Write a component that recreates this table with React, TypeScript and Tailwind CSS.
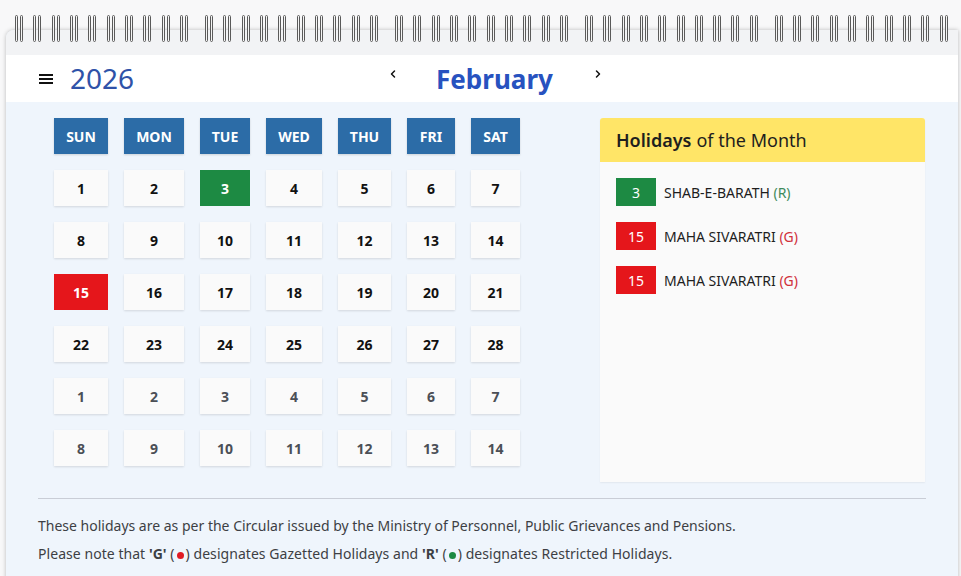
import { ChevronLeft, ChevronRight } from "lucide-react";

const days = ["SUN", "MON", "TUE", "WED", "THU", "FRI", "SAT"];

type Cell = { n: number; muted?: boolean; type?: "G" | "R" };

const weeks: Cell[][] = [
  [{ n: 1 }, { n: 2 }, { n: 3, type: "R" }, { n: 4 }, { n: 5 }, { n: 6 }, { n: 7 }],
  [{ n: 8 }, { n: 9 }, { n: 10 }, { n: 11 }, { n: 12 }, { n: 13 }, { n: 14 }],
  [{ n: 15, type: "G" }, { n: 16 }, { n: 17 }, { n: 18 }, { n: 19 }, { n: 20 }, { n: 21 }],
  [{ n: 22 }, { n: 23 }, { n: 24 }, { n: 25 }, { n: 26 }, { n: 27 }, { n: 28 }],
  [1, 2, 3, 4, 5, 6, 7].map((n) => ({ n, muted: true })),
  [8, 9, 10, 11, 12, 13, 14].map((n) => ({ n, muted: true })),
];

const holidays = [
  { day: 3, name: "SHAB-E-BARATH", type: "R" },
  { day: 15, name: "MAHA SIVARATRI", type: "G" },
  { day: 15, name: "MAHA SIVARATRI", type: "G" },
];

const Ring = () => (
  <div className="w-[3px] h-[27px] rounded-full border border-[#5a5a5a] bg-linear-to-r from-[#b8b8b8] via-[#f4f4f4] to-[#a0a0a0]" />
);

// spiral binding over the top edge of the card
const Rings = () => (
  <div className="absolute top-[15px] left-[15px] flex gap-x-[17px]">
    {[0, 1, 2, 3, 4].map((g) => (
      <div key={g} className="flex gap-x-[10.33px]">
        {Array.from({ length: 10 }).map((_, i) => (
          <div key={i} className="flex gap-x-[2px] w-[8px]">
            <Ring />
            <Ring />
          </div>
        ))}
      </div>
    ))}
  </div>
);

const dayCellClass = (c: Cell) => {
  if (c.type === "R") return "bg-[#1d8a43] text-white";
  if (c.type === "G") return "bg-[#e5161b] text-white";
  if (c.muted) return "bg-[#fafafa] text-[#4b4f56] shadow-[0_1px_2px_rgba(0,0,0,0.12)]";
  return "bg-[#fafafa] text-[#111] shadow-[0_1px_2px_rgba(0,0,0,0.12)]";
};

export default function App() {
  return (
    <div className="relative w-[961px] h-[576px] overflow-hidden bg-[#f8f8f9] font-['Noto_Sans',sans-serif]">
      <div className="ml-[6px] mr-[3px] mt-[30px] h-[560px] rounded-tl-[8px] bg-[#eff5fc] shadow-[0_0_4px_rgba(0,0,0,0.25)] overflow-hidden">
        <div className="h-[25px] bg-[#f2f3f5]" />

        {/* header */}
        <div className="h-[47px] bg-white flex items-center">
          <svg className="ml-[33px] w-[14px] h-[10px]" viewBox="0 0 14 10">
            <rect x="0" y="0" width="14" height="2" fill="#111" />
            <rect x="0" y="4" width="14" height="2" fill="#111" />
            <rect x="0" y="8" width="14" height="2" fill="#111" />
          </svg>
          <span className="ml-[17px] text-[28px] leading-none text-[#2f52a8] -mt-[1px]">2026</span>
          <ChevronLeft className="ml-[253px] -mt-[10px] w-[12px] h-[12px] text-[#111]" strokeWidth={3} />
          <span className="ml-[37px] text-[26px] font-bold leading-none text-[#2752bf] mt-[1px]">February</span>
          <ChevronRight className="ml-[39px] -mt-[10px] w-[12px] h-[12px] text-[#111]" strokeWidth={3} />
        </div>

        {/* body */}
        <div className="pt-[16px] flex">
          <div className="ml-[48px] grid grid-cols-[54px_60px_50px_56px_53px_48px_49px] gap-4 auto-rows-[36px]">
            {days.map((d) => (
              <div
                key={d}
                className="bg-[#2c6ca7] text-white text-[14px] font-bold flex items-center justify-center shadow-[0_1px_2px_rgba(0,0,0,0.15)]"
              >
                {d}
              </div>
            ))}
            {weeks.flat().map((c, i) => (
              <div
                key={i}
                className={`text-[14px] font-bold flex items-center justify-center ${dayCellClass(c)}`}
              >
                {c.n}
              </div>
            ))}
          </div>

          <div className="ml-[80px] w-[325px] h-[364px] rounded-t-[3px] overflow-hidden bg-[#fafafa] shadow-[0_1px_2px_rgba(0,0,0,0.06)]">
            <div className="h-[44px] bg-[#ffe567] flex items-center pl-[16px] text-[18px] text-[#1e1e1e]">
              <span className="font-semibold">Holidays</span>
              <span className="ml-[5px]">of the Month</span>
            </div>
            <div className="pt-[16px] pl-[16px] flex flex-col gap-4">
              {holidays.map((h, i) => (
                <div key={i} className="flex items-center">
                  <div
                    className={`w-[40px] h-[28px] flex items-center justify-center text-[14px] text-white ${
                      h.type === "R" ? "bg-[#1d8a43]" : "bg-[#e5161b]"
                    }`}
                  >
                    {h.day}
                  </div>
                  <span className="ml-[8px] text-[14px] text-[#1e1e1e]">
                    {h.name}{" "}
                    <span className={h.type === "R" ? "text-[#3e8a5c]" : "text-[#d0303a]"}>
                      ({h.type})
                    </span>
                  </span>
                </div>
              ))}
            </div>
          </div>
        </div>

        {/* footer */}
        <div className="mx-[32px] mt-[16px] border-t border-[#c9cdd6]" />
        <div className="ml-[32px] pt-[13px] text-[14px] text-[#3d3f44] leading-[28px]">
          <p>These holidays are as per the Circular issued by the Ministry of Personnel, Public Grievances and Pensions.</p>
          <p className="tracking-[0.05px]">
            Please note that <span className="font-bold">'G'</span> (
            <span className="inline-block mx-[2px] w-[7px] h-[7px] rounded-full bg-[#e01b24] align-middle" />) designates
            Gazetted Holidays and <span className="font-bold">'R'</span> (
            <span className="inline-block mx-[2px] w-[7px] h-[7px] rounded-full bg-[#1d8a43] align-middle" />) designates
            Restricted Holidays.
          </p>
        </div>
      </div>
      <Rings />
    </div>
  );
}
